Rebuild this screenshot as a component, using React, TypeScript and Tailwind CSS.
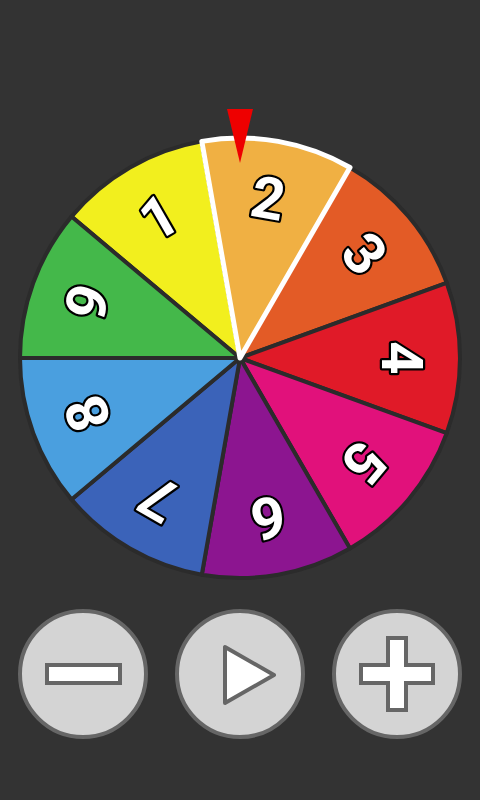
import React from 'react';

const CX = 240;
const CY = 358;
const R = 220;

const segments = [
  { label: '1', color: '#f2ef1e' },
  { label: '2', color: '#f0b043' },
  { label: '3', color: '#e35b26' },
  { label: '4', color: '#e01a28' },
  { label: '5', color: '#e1117b' },
  { label: '6', color: '#8c1590' },
  { label: '7', color: '#3b63b9' },
  { label: '8', color: '#4a9fdf' },
  { label: '9', color: '#44b84a' },
];

const SELECTED = 1;

function pt(angle: number, r: number) {
  const a = (angle * Math.PI) / 180;
  return `${(CX + r * Math.sin(a)).toFixed(2)} ${(CY - r * Math.cos(a)).toFixed(2)}`;
}

function slice(start: number, end: number, r: number) {
  return `M${CX} ${CY} L${pt(start, r)} A${r} ${r} 0 0 1 ${pt(end, r)} Z`;
}

const Label: React.FC<{ text: string; angle: number }> = ({ text, angle }) => (
  <g transform={`translate(${CX} ${CY}) rotate(${angle}) translate(0 -163)`}>
    <text
      x={0}
      y={0}
      dy="0.36em"
      textAnchor="middle"
      fontSize={58}
      fontWeight="bold"
      fontFamily="Roboto, 'Liberation Sans', sans-serif"
      fill="#ffffff"
      stroke="#000000"
      strokeWidth={4.5}
      strokeLinejoin="round"
      paintOrder="stroke"
    >
      {text}
    </text>
  </g>
);

const Wheel: React.FC = () => {
  const sel = segments[SELECTED];
  const selStart = -50 + SELECTED * 40;
  return (
    <svg width={480} height={609} viewBox="0 0 480 609" className="block">
      {segments.map((s, i) => {
        const start = -50 + i * 40;
        return (
          <path
            key={s.label}
            d={slice(start, start + 40, R)}
            fill={s.color}
            stroke="#2b2b2b"
            strokeWidth={4}
            strokeLinejoin="round"
          />
        );
      })}
      {segments.map((s, i) =>
        i === SELECTED ? null : <Label key={s.label} text={s.label} angle={-30 + i * 40} />
      )}
      <path
        d={slice(selStart, selStart + 40, R)}
        fill={sel.color}
        stroke="#ffffff"
        strokeWidth={5}
        strokeLinejoin="round"
      />
      <Label text={sel.label} angle={selStart + 20} />
      <polygon points="227,109 253,109 240,163" fill="#ee0000" />
    </svg>
  );
};

const RoundButton: React.FC<{ children: React.ReactNode; label: string }> = ({ children, label }) => (
  <button
    aria-label={label}
    className="w-[130px] h-[130px] rounded-full border-4 border-[#666666] bg-[#d4d4d4] flex items-center justify-center"
  >
    <svg width={122} height={122} viewBox="-61 -61 122 122">
      {children}
    </svg>
  </button>
);

export default function App() {
  return (
    <div className="w-[480px] h-[800px] bg-[#333333] flex flex-col overflow-hidden">
      <Wheel />
      <div className="flex justify-center gap-[27px]">
        <RoundButton label="minus">
          <rect x={-36} y={-9} width={73} height={18} fill="#ffffff" stroke="#666666" strokeWidth={4} />
        </RoundButton>
        <RoundButton label="play">
          <polygon
            points="-15,-27 -15,29 34,1"
            fill="#ffffff"
            stroke="#666666"
            strokeWidth={4}
            strokeLinejoin="round"
          />
        </RoundButton>
        <RoundButton label="plus">
          <path
            d="M-9 -36 H9 V-9 H36 V9 H9 V36 H-9 V9 H-36 V-9 H-9 Z"
            fill="#ffffff"
            stroke="#666666"
            strokeWidth={4}
          />
        </RoundButton>
      </div>
    </div>
  );
}
